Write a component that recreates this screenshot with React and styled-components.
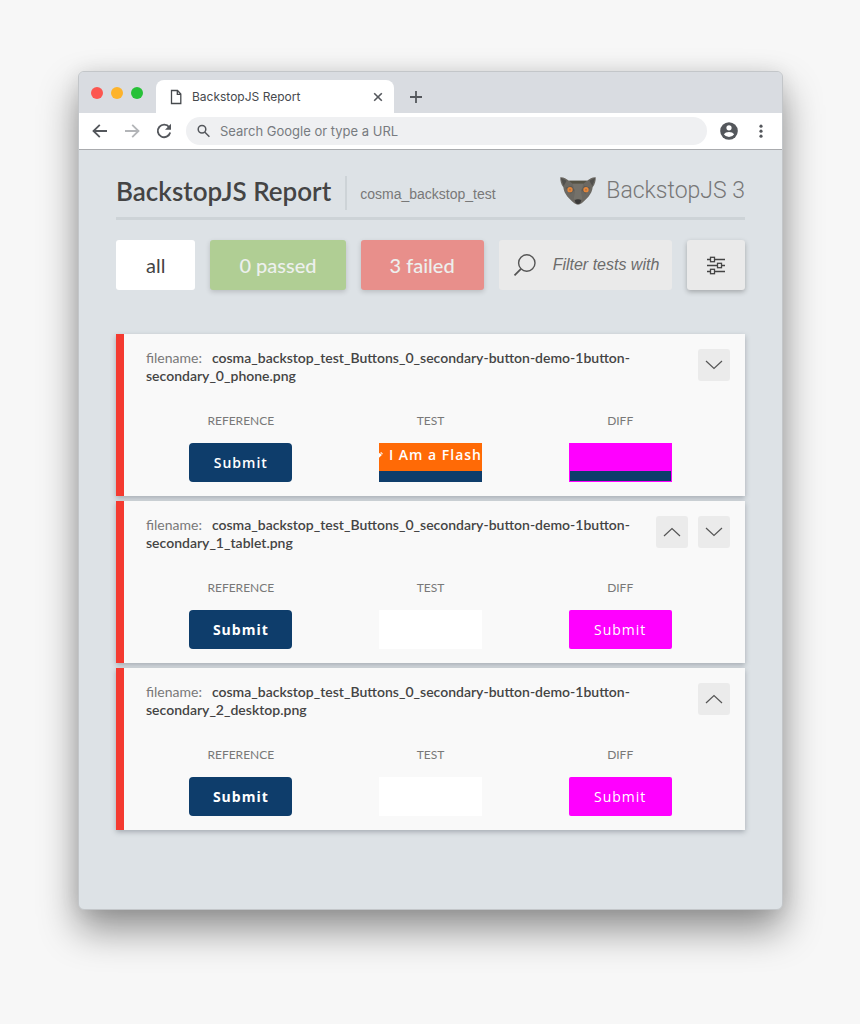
import React, { useState } from "react";
import styled, { createGlobalStyle } from "styled-components";

const colors = {
  page: "#dde2e6",
  chrome: "#d9dce1",
  icon: "#54575c",
  text: "#444",
  muted: "#787878",
  pass: "#b0ce94",
  fail: "#e88f8b",
  failBar: "#f43a30",
  navy: "#0e3d6b",
  flash: "#ff6a06",
  diff: "#ff00ff",
};

const GlobalStyle = createGlobalStyle`
  * {
    box-sizing: border-box;
  }
  body {
    margin: 0;
    background: #f7f7f7;
    font-family: Lato, "Liberation Sans", sans-serif;
    color: ${colors.text};
  }
  button, input {
    font-family: inherit;
    color: inherit;
  }
`;

const Desktop = styled.div`
  display: flex;
  min-height: 100vh;
  padding: 71px 77px 114px 78px;
`;

const BrowserWindow = styled.div`
  flex: 1;
  min-width: 0;
  display: flex;
  flex-direction: column;
  border: 1px solid #c3c6c9;
  border-radius: 6px;
  overflow: hidden;
  background: ${colors.page};
  box-shadow: 0 20px 38px rgba(0, 0, 0, 0.42), 0 0 20px rgba(0, 0, 0, 0.08);
`;

const TabBar = styled.div`
  display: flex;
  align-items: flex-end;
  height: 41px;
  padding-left: 12px;
  background: ${colors.chrome};
`;

const WindowControls = styled.div`
  display: flex;
  align-self: center;
  gap: 8px;
  margin-right: 13px;
`;

const Dot = styled.span`
  width: 12px;
  height: 12px;
  border-radius: 50%;
  background: ${(props) => props.color};
`;

const BrowserTab = styled.div`
  display: flex;
  align-items: center;
  width: 238px;
  height: 33px;
  padding: 0 10px 0 14px;
  border-radius: 8px 8px 0 0;
  background: #fff;
  color: #46494d;
  font-family: Inter, sans-serif;
  font-size: 12px;
`;

const TabTitle = styled.span`
  flex: 1;
  margin-left: 10px;
`;

const IconButton = styled.button`
  display: flex;
  align-items: center;
  justify-content: center;
  padding: 0;
  border: none;
  background: none;
  color: ${(props) => (props.$dim ? "#b3b5b8" : colors.icon)};
  cursor: pointer;
`;

const NewTab = styled(IconButton)`
  width: 44px;
  height: 33px;
`;

const Toolbar = styled.div`
  display: flex;
  align-items: center;
  gap: 12px;
  height: 37px;
  padding: 0 11px;
  border-bottom: 1px solid #a9abae;
  background: #fff;
`;

const Omnibox = styled.label`
  flex: 1;
  display: flex;
  align-items: center;
  gap: 8px;
  height: 28px;
  padding: 0 10px;
  border-radius: 14px;
  background: #eff0f2;
  color: ${colors.icon};
`;

const UrlInput = styled.input`
  flex: 1;
  min-width: 0;
  padding: 0;
  border: none;
  outline: none;
  background: none;
  font-family: Inter, sans-serif;
  font-size: 13px;
  &::placeholder {
    color: #777b80;
    opacity: 1;
  }
`;

const ToolbarEnd = styled.div`
  display: flex;
  align-items: center;
  gap: 12px;
`;

const Report = styled.main`
  flex: 1;
  padding: 26px 37px 40px;
`;

const Header = styled.header`
  display: flex;
  align-items: center;
  padding-bottom: 7px;
  border-bottom: 3px solid #cdd3d7;
`;

const Title = styled.h1`
  margin: 0;
  padding: 0 14px 4px 0;
  border-right: 2px solid #cdd3d7;
  font-size: 26px;
  font-weight: 600;
  line-height: 30px;
  white-space: nowrap;
`;

const ProjectName = styled.span`
  flex: 1;
  padding: 2px 0 0 13px;
  font-family: "Liberation Sans", sans-serif;
  font-size: 14px;
  color: ${colors.muted};
`;

const Brand = styled.div`
  display: flex;
  align-items: center;
  gap: 9px;
  padding-bottom: 4px;
  font-family: Roboto, sans-serif;
  font-size: 23px;
  font-weight: 300;
  line-height: 30px;
  color: #777;
  white-space: nowrap;
`;

const Filters = styled.div`
  display: flex;
  gap: 15px;
  margin: 20px 0 44px;
`;

const FilterButton = styled.button`
  height: 50px;
  padding: ${(props) => (props.$raised ? "0 29px" : "0 30px")};
  border: none;
  border-radius: 3px;
  background: ${(props) => props.$bg};
  color: ${(props) => props.$fg};
  font-size: 20px;
  font-weight: ${(props) => (props.$raised ? 500 : 400)};
  white-space: nowrap;
  box-shadow: ${(props) =>
    props.$raised ? "0 2px 5px rgba(0, 0, 0, 0.16)" : "none"};
  cursor: pointer;
`;

const SearchBox = styled.label`
  flex: 1;
  min-width: 0;
  display: flex;
  align-items: center;
  gap: 16px;
  height: 50px;
  padding: 0 12px 0 14px;
  border-radius: 3px;
  background: #eaeaea;
`;

const SearchInput = styled.input`
  flex: 1;
  min-width: 0;
  padding: 0;
  border: none;
  outline: none;
  background: none;
  font-family: "Liberation Sans", sans-serif;
  font-size: 16px;
  font-style: italic;
  &::placeholder {
    color: #6c6c6c;
    opacity: 1;
  }
`;

const SettingsButton = styled(IconButton)`
  width: 58px;
  height: 50px;
  border-radius: 3px;
  background: #eaeaea;
  box-shadow: 0 2px 5px rgba(0, 0, 0, 0.26);
`;

const CardList = styled.div`
  display: flex;
  flex-direction: column;
  gap: 5px;
`;

const Card = styled.article`
  padding: 15px 15px 14px 22px;
  border-left: 8px solid ${colors.failBar};
  background: #f9f9f9;
  box-shadow: 0 2px 5px rgba(60, 70, 80, 0.35);
`;

const CardHeader = styled.div`
  display: flex;
  align-items: flex-start;
  justify-content: space-between;
  gap: 20px;
`;

const FileName = styled.p`
  margin: 0;
  font-size: 14px;
  line-height: 18px;
  font-weight: 600;
`;

const FileLabel = styled.span`
  margin-right: 10px;
  font-weight: 400;
  color: ${colors.muted};
`;

const CardNav = styled.div`
  display: flex;
  gap: 10px;
`;

const NavButton = styled(IconButton)`
  width: 32px;
  height: 32px;
  border-radius: 3px;
  background: #ebebeb;
`;

const Shots = styled.div`
  display: grid;
  grid-template-columns: repeat(3, 1fr);
  padding: 28px 15px 0 0;
`;

const Shot = styled.div`
  display: flex;
  flex-direction: column;
  align-items: center;
  gap: 14px;
`;

const ShotLabel = styled.span`
  font-size: 12px;
  line-height: 16px;
  color: ${colors.muted};
`;

const Preview = styled.button`
  display: flex;
  flex-direction: column;
  align-items: center;
  justify-content: center;
  width: 103px;
  height: 39px;
  padding: 0;
  border: none;
  border-radius: ${(props) => props.$radius || 0}px;
  background: ${(props) => props.$bg};
  color: #fff;
  font-family: "Open Sans", sans-serif;
  font-size: 14px;
  font-weight: ${(props) => props.$weight || 600};
  letter-spacing: 1px;
  overflow: hidden;
  cursor: pointer;
`;

const FlashBanner = styled.span`
  display: flex;
  align-items: center;
  align-self: stretch;
  flex: 1;
  gap: 6px;
  padding-bottom: 5px;
  background: ${colors.flash};
  white-space: nowrap;
`;

const DiffFill = styled.span`
  flex: 1;
`;

const NavyStrip = styled.span`
  align-self: stretch;
  height: 11px;
  background: ${colors.navy};
  border: solid ${colors.diff};
  border-width: ${(props) => (props.$outlined ? "0 1px 1px" : "0")};
`;

const LemurLogo = () => (
  <svg width="38" height="30" viewBox="0 0 114 90" aria-hidden="true">
    <path
      d="M4 4 C13 3 22 9 30 14 H84 C92 9 101 3 110 4 C111 14 108 25 101 34 C99 55 82 70 68 82 Q57 90 46 82 C32 70 15 55 13 34 C6 25 3 14 4 4Z"
      fill="#6b6862"
    />
    <path d="M5 5 L23 14 L14 30Z M109 5 L91 14 L100 30Z" fill="#51504d" />
    <path d="M30 14 H84 L73 23 H41Z" fill="#555244" />
    <path d="M41 23 H73 L66 48 L70 70 H44 L48 48Z" fill="#74716a" />
    <path d="M19 35 L38 29 L47 43 L35 53Z M95 35 L76 29 L67 43 L79 53Z" fill="#5d5a55" />
    <circle cx="33" cy="41" r="8" fill="#e6873b" />
    <circle cx="81" cy="41" r="8" fill="#e6873b" />
    <circle cx="33" cy="41" r="3" fill="#b5733f" />
    <circle cx="81" cy="41" r="3" fill="#b5733f" />
    <path d="M47 73 Q57 67 67 73 L64 81 Q57 87 50 81Z" fill="#3a3938" />
  </svg>
);

const FileIcon = () => (
  <svg width="12" height="16" viewBox="0 0 12 16" fill="none" stroke="#46494d" strokeWidth="1.3">
    <path d="M1.5 1.5 H7.5 L10.8 5 V14.5 H1.5Z M7.3 1.5 V5.3 H10.8" />
  </svg>
);

const CloseIcon = () => (
  <svg width="12" height="12" viewBox="0 0 12 12" stroke="currentColor" strokeWidth="1.6">
    <path d="M2.2 2.2 L9.8 9.8 M9.8 2.2 L2.2 9.8" />
  </svg>
);

const PlusIcon = () => (
  <svg width="14" height="14" viewBox="0 0 14 14" stroke="currentColor" strokeWidth="1.8">
    <path d="M7 1 V13 M1 7 H13" />
  </svg>
);

const ArrowIcon = ({ flip }) => (
  <svg width="20" height="20" viewBox="0 0 20 20" fill="none" stroke="currentColor" strokeWidth="1.8">
    <path d={flip ? "M3 10 H16.4 M10.2 3.8 L16.5 10 L10.2 16.2" : "M17 10 H3.6 M9.8 3.8 L3.5 10 L9.8 16.2"} />
  </svg>
);

const ReloadIcon = () => (
  <svg width="20" height="20" viewBox="0 0 20 20">
    <path
      d="M15.2 6.2 A6.3 6.3 0 1 0 16.2 11.5"
      fill="none"
      stroke="currentColor"
      strokeWidth="1.9"
    />
    <path d="M17 2.8 V8.8 H11Z" fill="currentColor" />
  </svg>
);

const MagnifierIcon = () => (
  <svg width="16" height="16" viewBox="0 0 16 16" fill="none" stroke="currentColor" strokeWidth="1.5">
    <circle cx="6" cy="6.3" r="3.8" />
    <path d="M8.9 9.2 L13.4 13.7" />
  </svg>
);

const AccountIcon = () => (
  <svg width="20" height="20" viewBox="0 0 20 20">
    <circle cx="10" cy="10" r="8.8" fill="currentColor" />
    <circle cx="10" cy="6.8" r="2.6" fill="#fff" />
    <path d="M4.8 13.2 Q6.5 11 10 11 T15.2 13.2 Q13.3 16 10 16 T4.8 13.2Z" fill="#fff" />
  </svg>
);

const MenuIcon = () => (
  <svg width="20" height="20" viewBox="0 0 20 20" fill="currentColor">
    <circle cx="10" cy="5.2" r="1.6" />
    <circle cx="10" cy="10.2" r="1.6" />
    <circle cx="10" cy="15.2" r="1.6" />
  </svg>
);

const SearchIcon = () => (
  <svg width="24" height="24" viewBox="0 0 24 24" fill="none" stroke="#555" strokeWidth="1.4">
    <circle cx="13.8" cy="10" r="8.2" />
    <path d="M8 15.8 L1.5 22.3" strokeWidth="1.7" />
  </svg>
);

const SlidersIcon = () => (
  <svg width="20" height="20" viewBox="0 0 20 20" fill="none" stroke="#444" strokeWidth="1.3">
    <path d="M1 4.5 H4.5 M8.5 4.5 H19 M1 10.5 H11.5 M15.5 10.5 H19 M1 16.5 H4.5 M8.5 16.5 H19" />
    <rect x="4.5" y="2.3" width="4" height="4.4" />
    <rect x="11.5" y="8.3" width="4" height="4.4" />
    <rect x="4.5" y="14.3" width="4" height="4.4" />
  </svg>
);

const Chevron = ({ up }) => (
  <svg width="18" height="10" viewBox="0 0 18 10" fill="none" stroke="#555" strokeWidth="1.2">
    <path d={up ? "M1 9 L9 1.5 L17 9" : "M1 1 L9 8.5 L17 1"} />
  </svg>
);

const PinIcon = () => (
  <svg width="7" height="12" viewBox="0 0 7 12" fill="#fff">
    <path d="M0 3.5 L1.6 2.2 L5.2 5.8 L0 11Z M2.4 1.6 L3.8 0.4 L7 3.6 L5.8 5Z" />
  </svg>
);

const filePrefix = "cosma_backstop_test_Buttons_0_secondary-button-demo-1button-";

const tests = [
  {
    fileName: `${filePrefix}secondary_0_phone.png`,
    down: true,
    weight: 600,
    test: "flash",
    diff: "partial",
  },
  {
    fileName: `${filePrefix}secondary_1_tablet.png`,
    up: true,
    down: true,
    weight: 700,
    test: "blank",
    diff: "full",
  },
  {
    fileName: `${filePrefix}secondary_2_desktop.png`,
    up: true,
    weight: 700,
    test: "blank",
    diff: "full",
  },
];

const TestShot = ({ kind }) => {
  if (kind === "blank") return <Preview $bg="#fff" aria-label="Test image" />;
  return (
    <Preview $bg={colors.navy}>
      <FlashBanner>
        <PinIcon />
        I Am a Flash
      </FlashBanner>
      <NavyStrip />
    </Preview>
  );
};

const DiffShot = ({ kind }) => {
  if (kind === "full")
    return (
      <Preview $bg={colors.diff} $radius={2} $weight={400}>
        Submit
      </Preview>
    );
  return (
    <Preview $bg={colors.diff} aria-label="Diff image">
      <DiffFill />
      <NavyStrip $outlined />
    </Preview>
  );
};

const TestCard = ({ test }) => (
  <Card>
    <CardHeader>
      <FileName>
        <FileLabel>filename:</FileLabel>
        {test.fileName}
      </FileName>
      <CardNav>
        {test.up && (
          <NavButton aria-label="Previous test">
            <Chevron up />
          </NavButton>
        )}
        {test.down && (
          <NavButton aria-label="Next test">
            <Chevron />
          </NavButton>
        )}
      </CardNav>
    </CardHeader>
    <Shots>
      <Shot>
        <ShotLabel>REFERENCE</ShotLabel>
        <Preview $bg={colors.navy} $radius={4} $weight={test.weight}>
          Submit
        </Preview>
      </Shot>
      <Shot>
        <ShotLabel>TEST</ShotLabel>
        <TestShot kind={test.test} />
      </Shot>
      <Shot>
        <ShotLabel>DIFF</ShotLabel>
        <DiffShot kind={test.diff} />
      </Shot>
    </Shots>
  </Card>
);

const App = () => {
  const [url, setUrl] = useState("");
  const [query, setQuery] = useState("");

  return (
    <Desktop>
      <GlobalStyle />
      <BrowserWindow>
        <TabBar>
          <WindowControls>
            <Dot color="#fc5650" />
            <Dot color="#fdb32b" />
            <Dot color="#27c138" />
          </WindowControls>
          <BrowserTab>
            <FileIcon />
            <TabTitle>BackstopJS Report</TabTitle>
            <IconButton aria-label="Close tab">
              <CloseIcon />
            </IconButton>
          </BrowserTab>
          <NewTab aria-label="New tab">
            <PlusIcon />
          </NewTab>
        </TabBar>
        <Toolbar>
          <IconButton aria-label="Back">
            <ArrowIcon />
          </IconButton>
          <IconButton aria-label="Forward" $dim>
            <ArrowIcon flip />
          </IconButton>
          <IconButton aria-label="Reload">
            <ReloadIcon />
          </IconButton>
          <Omnibox>
            <MagnifierIcon />
            <UrlInput
              aria-label="Address"
              placeholder="Search Google or type a URL"
              value={url}
              onChange={(e) => setUrl(e.target.value)}
            />
          </Omnibox>
          <ToolbarEnd>
            <IconButton aria-label="Account">
              <AccountIcon />
            </IconButton>
            <IconButton aria-label="Menu">
              <MenuIcon />
            </IconButton>
          </ToolbarEnd>
        </Toolbar>
        <Report>
          <Header>
            <Title>BackstopJS Report</Title>
            <ProjectName>cosma_backstop_test</ProjectName>
            <Brand>
              <LemurLogo />
              BackstopJS 3
            </Brand>
          </Header>
          <Filters>
            <FilterButton $bg="#fff" $fg={colors.text}>
              all
            </FilterButton>
            <FilterButton $bg={colors.pass} $fg="#edf0ee" $raised>
              0 passed
            </FilterButton>
            <FilterButton $bg={colors.fail} $fg="#edf0ee" $raised>
              3 failed
            </FilterButton>
            <SearchBox>
              <SearchIcon />
              <SearchInput
                aria-label="Filter tests"
                placeholder="Filter tests with"
                value={query}
                onChange={(e) => setQuery(e.target.value)}
              />
            </SearchBox>
            <SettingsButton aria-label="Settings">
              <SlidersIcon />
            </SettingsButton>
          </Filters>
          <CardList>
            {tests.map((test) => (
              <TestCard key={test.fileName} test={test} />
            ))}
          </CardList>
        </Report>
      </BrowserWindow>
    </Desktop>
  );
};

export default App;
